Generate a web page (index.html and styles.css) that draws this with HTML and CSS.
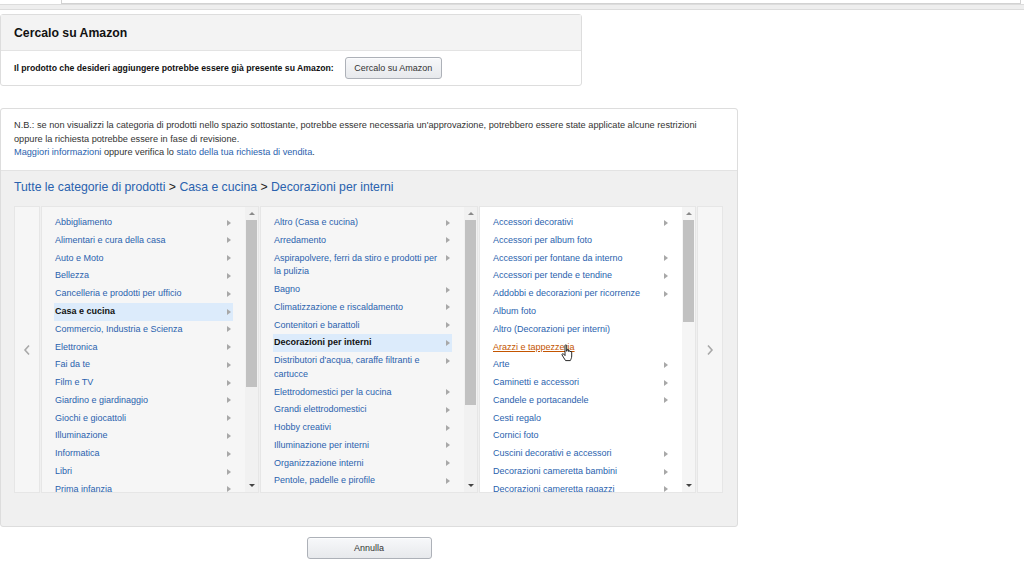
FILE: index.html
```html
<!DOCTYPE html>
<html lang="it">
<head>
<meta charset="utf-8">
<title>Seleziona categoria</title>
<link rel="stylesheet" href="styles.css">
</head>
<body>
<div class="topbar"><div class="url-box"></div><div class="band"></div></div>
<div class="page">
  <section class="card search-card">
    <div class="card-head">Cercalo su Amazon</div>
    <div class="card-body">
      <span class="lead">Il prodotto che desideri aggiungere potrebbe essere già presente su Amazon:</span>
      <button class="btn btn-search">Cercalo su Amazon</button>
    </div>
  </section>

  <section class="card cat-card">
    <div class="note">
      <p>N.B.: se non visualizzi la categoria di prodotti nello spazio sottostante, potrebbe essere necessaria un'approvazione, potrebbero essere state applicate alcune restrizioni oppure la richiesta potrebbe essere in fase di revisione.</p>
      <p><a href="#">Maggiori informazioni</a> oppure verifica lo <a href="#">stato della tua richiesta di vendita</a>.</p>
    </div>
    <div class="cat-area">
      <div class="crumbs"><a href="#">Tutte le categorie di prodotti</a> <span class="sep">&gt;</span> <a href="#">Casa e cucina</a> <span class="sep">&gt;</span> <a href="#">Decorazioni per interni</a></div>
      <div class="browser">
        <div class="nav"><svg width="8" height="12" viewBox="0 0 8 12"><polyline points="6,1.5 2,6 6,10.5" fill="none" stroke="#a9a9a9" stroke-width="1.6"/></svg></div>

        <div class="col">
          <ul class="list">
            <li class="item"><span class="txt">Abbigliamento</span><i class="arr"></i></li>
            <li class="item"><span class="txt">Alimentari e cura della casa</span><i class="arr"></i></li>
            <li class="item"><span class="txt">Auto e Moto</span><i class="arr"></i></li>
            <li class="item"><span class="txt">Bellezza</span><i class="arr"></i></li>
            <li class="item"><span class="txt">Cancelleria e prodotti per ufficio</span><i class="arr"></i></li>
            <li class="item sel"><span class="txt">Casa e cucina</span><i class="arr"></i></li>
            <li class="item"><span class="txt">Commercio, Industria e Scienza</span><i class="arr"></i></li>
            <li class="item"><span class="txt">Elettronica</span><i class="arr"></i></li>
            <li class="item"><span class="txt">Fai da te</span><i class="arr"></i></li>
            <li class="item"><span class="txt">Film e TV</span><i class="arr"></i></li>
            <li class="item"><span class="txt">Giardino e giardinaggio</span><i class="arr"></i></li>
            <li class="item"><span class="txt">Giochi e giocattoli</span><i class="arr"></i></li>
            <li class="item"><span class="txt">Illuminazione</span><i class="arr"></i></li>
            <li class="item"><span class="txt">Informatica</span><i class="arr"></i></li>
            <li class="item"><span class="txt">Libri</span><i class="arr"></i></li>
            <li class="item"><span class="txt">Prima infanzia</span><i class="arr"></i></li>
          </ul>
          <div class="sbar"><i class="up"></i><div class="thumb t1"></div><i class="down"></i></div>
        </div>

        <div class="col">
          <ul class="list">
            <li class="item"><span class="txt">Altro (Casa e cucina)</span><i class="arr"></i></li>
            <li class="item"><span class="txt">Arredamento</span><i class="arr"></i></li>
            <li class="item"><span class="txt">Aspirapolvere, ferri da stiro e prodotti per la pulizia</span><i class="arr"></i></li>
            <li class="item"><span class="txt">Bagno</span><i class="arr"></i></li>
            <li class="item"><span class="txt">Climatizzazione e riscaldamento</span><i class="arr"></i></li>
            <li class="item"><span class="txt">Contenitori e barattoli</span><i class="arr"></i></li>
            <li class="item sel"><span class="txt">Decorazioni per interni</span><i class="arr"></i></li>
            <li class="item"><span class="txt">Distributori d'acqua, caraffe filtranti e cartucce</span><i class="arr"></i></li>
            <li class="item"><span class="txt">Elettrodomestici per la cucina</span><i class="arr"></i></li>
            <li class="item"><span class="txt">Grandi elettrodomestici</span><i class="arr"></i></li>
            <li class="item"><span class="txt">Hobby creativi</span><i class="arr"></i></li>
            <li class="item"><span class="txt">Illuminazione per interni</span><i class="arr"></i></li>
            <li class="item"><span class="txt">Organizzazione interni</span><i class="arr"></i></li>
            <li class="item"><span class="txt">Pentole, padelle e pirofile</span><i class="arr"></i></li>
          </ul>
          <div class="sbar"><i class="up"></i><div class="thumb t2"></div><i class="down"></i></div>
        </div>

        <div class="col active">
          <ul class="list">
            <li class="item"><span class="txt">Accessori decorativi</span><i class="arr"></i></li>
            <li class="item"><span class="txt">Accessori per album foto</span></li>
            <li class="item"><span class="txt">Accessori per fontane da interno</span><i class="arr"></i></li>
            <li class="item"><span class="txt">Accessori per tende e tendine</span><i class="arr"></i></li>
            <li class="item"><span class="txt">Addobbi e decorazioni per ricorrenze</span><i class="arr"></i></li>
            <li class="item"><span class="txt">Album foto</span></li>
            <li class="item"><span class="txt">Altro (Decorazioni per interni)</span></li>
            <li class="item hover"><span class="txt">Arazzi e tappezzeria</span></li>
            <li class="item"><span class="txt">Arte</span><i class="arr"></i></li>
            <li class="item"><span class="txt">Caminetti e accessori</span><i class="arr"></i></li>
            <li class="item"><span class="txt">Candele e portacandele</span><i class="arr"></i></li>
            <li class="item"><span class="txt">Cesti regalo</span></li>
            <li class="item"><span class="txt">Cornici foto</span></li>
            <li class="item"><span class="txt">Cuscini decorativi e accessori</span><i class="arr"></i></li>
            <li class="item"><span class="txt">Decorazioni cameretta bambini</span><i class="arr"></i></li>
            <li class="item"><span class="txt">Decorazioni cameretta ragazzi</span><i class="arr"></i></li>
          </ul>
          <div class="sbar"><i class="up"></i><div class="thumb t3"></div><i class="down"></i></div>
        </div>

        <div class="nav"><svg width="8" height="12" viewBox="0 0 8 12"><polyline points="2,1.5 6,6 2,10.5" fill="none" stroke="#a9a9a9" stroke-width="1.6"/></svg></div>
      </div>
    </div>
  </section>

  <div class="actions"><button class="btn btn-cancel">Annulla</button></div>
</div>
<svg class="cursor" width="13" height="18" viewBox="0 0 13 18"><path d="M4 1.6C4 0.6 5.7 0.6 5.7 1.6V7.2H6V6C6 5.1 7.6 5.1 7.6 6V7.4C7.6 6.6 9.1 6.6 9.1 7.4V8C9.1 7.2 10.7 7.2 10.7 8V12C10.7 14 9.8 15.6 9.3 16.6H4.6C3.6 15 2.1 13 1.1 11C0.6 10 1.9 9.1 2.7 10.1L4 11.6Z" fill="#fff" stroke="#111" stroke-width="0.9" stroke-linejoin="round"/></svg>
</body>
</html>
```
FILE: styles.css
```css
* { box-sizing: border-box; }
html, body { margin: 0; padding: 0; }
body {
  background: #ffffff;
  font-family: "Liberation Sans", Arial, sans-serif;
  color: #222;
  width: 1024px;
  height: 576px;
  overflow: hidden;
}
a { color: #2a62ae; text-decoration: none; }

.topbar { background: #fff; }
.url-box {
  margin-left: 61px;
  margin-right: 3px;
  height: 4px;
  background: #fff;
  border: 1px solid #d2d2d2;
  border-top: none;
}
.band {
  height: 6px;
  background: #eeeeee;
  border-top: 1px solid #dcdcdc;
  border-bottom: 1px solid #dcdcdc;
}

.page { width: 738px; }

.card {
  border: 1px solid #dddddd;
  border-radius: 3px;
  background: #fff;
}

.search-card {
  width: 582px;
  margin-top: 4px;
}
.card-head {
  height: 36px;
  background: #f3f3f3;
  border-bottom: 1px solid #e3e3e3;
  padding-left: 13px;
  display: flex;
  align-items: center;
  font-size: 12.25px;
  font-weight: bold;
  color: #111;
}
.card-body {
  height: 34px;
  padding-left: 13px;
  display: flex;
  align-items: center;
  gap: 11px;
}
.lead {
  font-size: 8.7px;
  font-weight: bold;
  color: #111;
}
.btn {
  font-family: "Liberation Sans", Arial, sans-serif;
  font-size: 9px;
  color: #333;
  border: 1px solid #adb1b8;
  border-radius: 3px;
  background: linear-gradient(#f7f8fa, #e7e9ec);
  box-shadow: 0 1px 0 rgba(255,255,255,.6) inset;
  padding: 0;
}
.btn-search { width: 97px; height: 22px; }

.cat-card {
  margin-top: 22px;
  background: #f0f0f0;
  height: 419px;
}
.note {
  background: #fff;
  padding: 10px 24px 0 13px;
  height: 62px;
  border-bottom: 1px solid #e3e3e3;
  border-radius: 3px 3px 0 0;
  font-size: 9.2px;
  line-height: 13.5px;
  color: #333;
}
.note p { margin: 0; }

.cat-area {
  padding: 8px 13px 0 13px;
}
.crumbs {
  font-size: 12.25px;
  line-height: 16px;
  color: #222;
  height: 16px;
}
.crumbs .sep { color: #222; }

.browser {
  margin-top: 11px;
  height: 287px;
  display: flex;
  gap: 1px;
}
.nav {
  width: 26px;
  background: #f6f6f6;
  border: 1px solid #e6e6e6;
  display: flex;
  align-items: center;
  justify-content: center;
}
.col {
  width: 218px;
  display: flex;
  background: #f6f6f6;
  border: 1px solid #e6e6e6;
  overflow: hidden;
}
.col.active { background: #ffffff; width: 217px; }

.list {
  list-style: none;
  margin: 0;
  padding: 7px 12px 0 12px;
  flex: 1;
  overflow: hidden;
  font-size: 9px;
  line-height: 13.6px;
}
.item {
  display: flex;
  align-items: flex-start;
  padding: 2.1px 1px;
  color: #2a62ae;
}
.item .txt { flex: 1; }
.arr {
  flex: none;
  width: 0;
  height: 0;
  margin: 3.5px 1px 0 6px;
  border-left: 4px solid #a8a8a8;
  border-top: 3.5px solid transparent;
  border-bottom: 3.5px solid transparent;
}
.item.sel {
  background: #dcebfb;
  color: #111;
  font-weight: bold;
}
.item.hover .txt {
  color: #c45500;
  text-decoration: underline;
}

.sbar {
  width: 13px;
  flex: none;
  background: #f1f1f1;
  display: flex;
  flex-direction: column;
  align-items: center;
}
.col.active .sbar { background: #f5f5f5; }
.up, .down {
  width: 0;
  height: 0;
  border-left: 3px solid transparent;
  border-right: 3px solid transparent;
}
.up {
  margin-top: 5px;
  border-bottom: 3px solid #8a8a8a;
}
.down {
  margin-top: auto;
  margin-bottom: 5px;
  border-top: 3px solid #444;
}
.thumb {
  width: 11px;
  margin-top: 5px;
  background: #c1c1c1;
}
.t1 { height: 167px; }
.t2 { height: 185px; }
.t3 { height: 102px; }

.actions {
  margin-top: 10px;
  display: flex;
  justify-content: center;
}
.btn-cancel { width: 125px; height: 22px; }

.cursor {
  position: absolute;
  left: 561px;
  top: 344px;
}
```
